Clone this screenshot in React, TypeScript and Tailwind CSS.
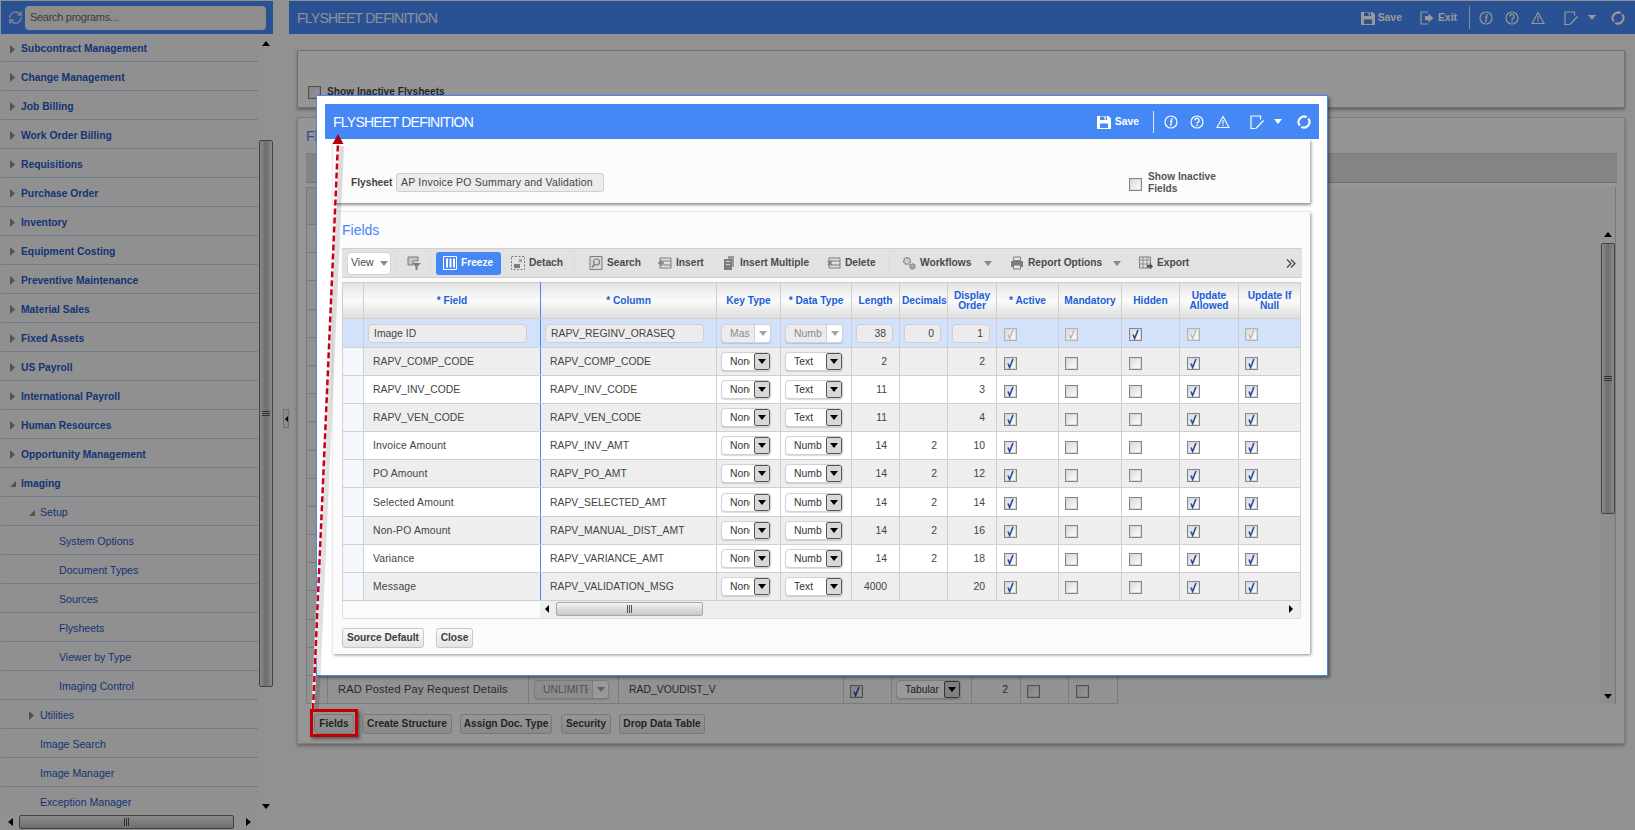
import { RefreshCw } from "lucide-react";
import type { ReactNode } from "react";

type IconProps = { className?: string };

const sideMenu = [
  { label: "Subcontract Management", level: 0, arrow: "right" },
  { label: "Change Management", level: 0, arrow: "right" },
  { label: "Job Billing", level: 0, arrow: "right" },
  { label: "Work Order Billing", level: 0, arrow: "right" },
  { label: "Requisitions", level: 0, arrow: "right" },
  { label: "Purchase Order", level: 0, arrow: "right" },
  { label: "Inventory", level: 0, arrow: "right" },
  { label: "Equipment Costing", level: 0, arrow: "right" },
  { label: "Preventive Maintenance", level: 0, arrow: "right" },
  { label: "Material Sales", level: 0, arrow: "right" },
  { label: "Fixed Assets", level: 0, arrow: "right" },
  { label: "US Payroll", level: 0, arrow: "right" },
  { label: "International Payroll", level: 0, arrow: "right" },
  { label: "Human Resources", level: 0, arrow: "right" },
  { label: "Opportunity Management", level: 0, arrow: "right" },
  { label: "Imaging", level: 0, arrow: "down" },
  { label: "Setup", level: 1, arrow: "down" },
  { label: "System Options", level: 2, arrow: "" },
  { label: "Document Types", level: 2, arrow: "" },
  { label: "Sources", level: 2, arrow: "" },
  { label: "Flysheets", level: 2, arrow: "" },
  { label: "Viewer by Type", level: 2, arrow: "" },
  { label: "Imaging Control", level: 2, arrow: "" },
  { label: "Utilities", level: 1, arrow: "right" },
  { label: "Image Search", level: 1, arrow: "" },
  { label: "Image Manager", level: 1, arrow: "" },
  { label: "Exception Manager", level: 1, arrow: "" },
];

const fieldRows = [
  { field: "RAPV_COMP_CODE", column: "RAPV_COMP_CODE", type: "Text", len: "2", dec: "", order: "2" },
  { field: "RAPV_INV_CODE", column: "RAPV_INV_CODE", type: "Text", len: "11", dec: "", order: "3" },
  { field: "RAPV_VEN_CODE", column: "RAPV_VEN_CODE", type: "Text", len: "11", dec: "", order: "4" },
  { field: "Invoice Amount", column: "RAPV_INV_AMT", type: "Number", len: "14", dec: "2", order: "10" },
  { field: "PO Amount", column: "RAPV_PO_AMT", type: "Number", len: "14", dec: "2", order: "12" },
  { field: "Selected Amount", column: "RAPV_SELECTED_AMT", type: "Number", len: "14", dec: "2", order: "14" },
  { field: "Non-PO Amount", column: "RAPV_MANUAL_DIST_AMT", type: "Number", len: "14", dec: "2", order: "16" },
  { field: "Variance", column: "RAPV_VARIANCE_AMT", type: "Number", len: "14", dec: "2", order: "18" },
  { field: "Message", column: "RAPV_VALIDATION_MSG", type: "Text", len: "4000", dec: "", order: "20" },
];

function Caret({ className = "" }: IconProps) {
  return (
    <svg viewBox="0 0 8 5" className={`h-[5px] w-[8px] shrink-0 fill-current ${className}`}>
      <path d="M0 0h8L4 5z" />
    </svg>
  );
}

function Floppy() {
  return (
    <svg viewBox="0 0 14 14" className="h-[14px] w-[14px] shrink-0 fill-current">
      <path fillRule="evenodd" d="M0 1h11.5L14 3.5V14H0zM3 1.5V5h7V1.5zM7.5 2h1.5v2.5H7.5zM3 8.5V13h8V8.5z" />
    </svg>
  );
}

function ExitDoor() {
  return (
    <svg viewBox="0 0 14 14" className="h-[14px] w-[14px] shrink-0">
      <path d="M8 1H1v12h7" fill="none" stroke="currentColor" strokeWidth="1.2" />
      <path d="M5 5h3.5V2.5L13.5 7l-5 4.5V9H5z" fill="currentColor" />
    </svg>
  );
}

function InfoCircle() {
  return (
    <svg viewBox="0 0 14 14" className="h-[14px] w-[14px] shrink-0">
      <circle cx="7" cy="7" r="6" fill="none" stroke="currentColor" strokeWidth="1.2" />
      <path d="M6.2 6h1.5l-1 4.2h1" fill="none" stroke="currentColor" strokeWidth="1.3" />
      <circle cx="7.8" cy="3.9" r="0.9" fill="currentColor" />
    </svg>
  );
}

function HelpCircle() {
  return (
    <svg viewBox="0 0 14 14" className="h-[14px] w-[14px] shrink-0">
      <circle cx="7" cy="7" r="6" fill="none" stroke="currentColor" strokeWidth="1.2" />
      <path d="M4.9 5.4a2.1 2.1 0 1 1 3.3 1.7c-.8.5-1.2.9-1.2 1.7" fill="none" stroke="currentColor" strokeWidth="1.3" />
      <circle cx="7" cy="10.4" r="0.85" fill="currentColor" />
    </svg>
  );
}

function Warning() {
  return (
    <svg viewBox="0 0 14 14" className="h-[14px] w-[14px] shrink-0">
      <path d="M7 1.6 13 12.5H1z" fill="none" stroke="currentColor" strokeWidth="1.1" />
      <path d="M7 5v4.2" stroke="currentColor" strokeWidth="1.1" />
      <circle cx="7" cy="10.6" r="0.7" fill="currentColor" />
    </svg>
  );
}

function NoteEdit() {
  return (
    <svg viewBox="0 0 14 14" className="h-[14px] w-[14px] shrink-0">
      <path d="M10.5 4.5V1H1v12.5h4" fill="none" stroke="currentColor" strokeWidth="1.2" />
      <path d="M5.5 13 13 5l1 1-7.2 7.6-1.8.4z" fill="currentColor" />
    </svg>
  );
}

function Ring() {
  return (
    <svg viewBox="0 0 14 14" className="h-[14px] w-[14px] shrink-0 fill-none stroke-current">
      <path d="M11.2 3.500A5.500 5.500 0 0 1 4.250 11.760" strokeWidth="2" />
      <path d="M2.800 10.500A5.500 5.500 0 0 1 9.750 2.240" strokeWidth="2" />
    </svg>
  );
}

function ToolIcon({ children }: { children: ReactNode }) {
  return (
    <svg viewBox="0 0 14 14" className="h-[14px] w-[14px] shrink-0 text-[#7d7d7d]">
      {children}
    </svg>
  );
}

const FilterIcon = () => (
  <ToolIcon>
    <path d="M1 1h10v4H6v4H1z" fill="#c4c4c4" stroke="currentColor" />
    <path d="M5 7h9l-3.5 3.5V14h-2v-3.5z" fill="currentColor" />
  </ToolIcon>
);
const FreezeIcon = () => (
  <svg viewBox="0 0 14 14" className="h-[14px] w-[14px] shrink-0">
    <path d="M.5.5h13v13H.5z" fill="none" stroke="#fff" />
    <path d="M3 2.5h2v9H3zM6.5 2.5h2v9h-2zM10 2.5h2v9h-2z" fill="#fff" />
  </svg>
);
const DetachIcon = () => (
  <ToolIcon>
    <path d="M.5.5h13v13H.5z" fill="none" stroke="currentColor" strokeDasharray="2 1.5" />
    <path d="M3 8h6v4H3z" fill="currentColor" />
    <path d="M8 3h3v3H8z" fill="#a0a0a0" />
  </ToolIcon>
);
const SearchIcon = () => (
  <ToolIcon>
    <path d="M1 .5h12v13H1z" fill="#d8d8d8" stroke="currentColor" />
    <circle cx="7.5" cy="6" r="3" fill="none" stroke="currentColor" strokeWidth="1.2" />
    <path d="M5.5 8.5 3 11.5" stroke="currentColor" strokeWidth="1.6" />
  </ToolIcon>
);
const InsertIcon = () => (
  <ToolIcon>
    <path d="M2 2h11v10H2z" fill="#e0e0e0" stroke="currentColor" />
    <path d="M2 5h11M2 9h11" stroke="currentColor" />
    <path d="M0 7h6M3 4.5v5" stroke="currentColor" strokeWidth="1.6" />
  </ToolIcon>
);
const InsertMultipleIcon = () => (
  <ToolIcon>
    <path d="M6 0h6v11H6z" fill="#999" />
    <path d="M2 3h8v11H2z" fill="currentColor" />
    <path d="M4 5h4v1H4zM4 8h4v1H4z" fill="#d0d0d0" />
  </ToolIcon>
);
const DeleteIcon = () => (
  <ToolIcon>
    <path d="M2 2h11v10H2z" fill="#e0e0e0" stroke="currentColor" />
    <path d="M2 5h11M2 9h11" stroke="currentColor" />
    <path d="M1 5l4 4M5 5 1 9" stroke="currentColor" strokeWidth="1.4" />
  </ToolIcon>
);
const GearsIcon = () => (
  <ToolIcon>
    <circle cx="5" cy="5" r="3.3" fill="#d0d0d0" stroke="currentColor" strokeWidth="1.4" strokeDasharray="2 .8" />
    <circle cx="10.5" cy="10.5" r="2.6" fill="#aaa" stroke="currentColor" strokeWidth="1.2" strokeDasharray="1.6 .7" />
  </ToolIcon>
);
const PrinterIcon = () => (
  <ToolIcon>
    <path d="M3.5 1h7v3.5h-7z" fill="#e4e4e4" stroke="currentColor" />
    <path d="M1 5h12v6H1z" fill="currentColor" />
    <path d="M3.5 9h7v4h-7z" fill="#e4e4e4" stroke="currentColor" />
  </ToolIcon>
);
const ExportIcon = () => (
  <ToolIcon>
    <path d="M.5 1h11v11H.5z" fill="#e0e0e0" stroke="currentColor" />
    <path d="M.5 4h11M4 1v11M8 1v11M.5 8h11" stroke="currentColor" strokeWidth="0.8" />
    <path d="M8 9h3V7l3 3.5-3 3v-2H8z" fill="#555" />
  </ToolIcon>
);

function Check({ on = false, disabled = false }: { on?: boolean; disabled?: boolean }) {
  return (
    <span
      className={`relative mt-[3px] block h-[13px] w-[13px] border bg-gradient-to-br from-[#d8d8d8] to-white shadow-[inset_0_0_0_1px_#dadada] ${
        disabled ? "border-[#b4b4b4]" : "border-[#868686]"
      }`}
    >
      {on && (
        <svg viewBox="0 0 11 11" className="absolute inset-0 h-[11px] w-[11px]">
          <path
            d="M3 5.5 4.6 9.5 8 1"
            fill="none"
            stroke={disabled ? "#b0b0b0" : "#2c4a9c"}
            strokeWidth={disabled ? 1.1 : 1.6}
          />
        </svg>
      )}
    </span>
  );
}

function Select({ text, disabled = false, className = "" }: { text: string; disabled?: boolean; className?: string }) {
  return (
    <div
      className={`flex h-[19px] overflow-hidden rounded-[4px] border border-[#d2d2d2] shadow-[0_1px_1px_rgba(0,0,0,0.15)] ${
        disabled ? "bg-[#ececec] text-[#8a8a8a]" : "bg-white text-[#333]"
      } ${className}`}
    >
      <span className="ml-[8px] mr-[4px] min-w-0 flex-1 overflow-hidden whitespace-nowrap leading-[17px]">{text}</span>
      <span
        className={`flex w-[16px] shrink-0 items-center justify-center border ${
          disabled
            ? "border-y-0 border-r-0 border-[#d0d0d0] bg-white text-[#a4a4a4]"
            : "rounded-[2px] border-[#555] bg-[#d8d8d8] text-black"
        }`}
      >
        <Caret />
      </span>
    </div>
  );
}

function ReadonlyInput({ value, className = "" }: { value: string; className?: string }) {
  return (
    <div
      className={`h-[19px] rounded-[4px] border border-[#cfcfcf] bg-[#ececec] px-[5px] leading-[17px] text-[#444] ${className}`}
    >
      {value}
    </div>
  );
}

function GrayButton({ children, className = "" }: { children: ReactNode; className?: string }) {
  return (
    <button
      className={`flex h-[20px] items-center justify-center whitespace-nowrap rounded-[3px] border border-[#c8c8c8] bg-gradient-to-b from-[#fafafa] to-[#e4e4e4] text-[10.2px] font-bold text-[#3c3c3c] ${className}`}
    >
      {children}
    </button>
  );
}

function Tool({ icon, label, className = "" }: { icon: ReactNode; label: string; className?: string }) {
  return (
    <div className={`flex shrink-0 items-center gap-[4px] whitespace-nowrap ${className}`}>
      {icon}
      <span>{label}</span>
    </div>
  );
}

function ThumbGrip({ vertical = false }: { vertical?: boolean }) {
  return (
    <span className={vertical ? "flex flex-col gap-px" : "flex gap-px"}>
      <span className={vertical ? "h-px w-[8px] bg-[#555]" : "h-[8px] w-px bg-[#555]"} />
      <span className={vertical ? "h-px w-[8px] bg-[#555]" : "h-[8px] w-px bg-[#555]"} />
      <span className={vertical ? "h-px w-[8px] bg-[#555]" : "h-[8px] w-px bg-[#555]"} />
    </span>
  );
}

function Sidebar() {
  return (
    <aside className="flex h-[829px] w-[272px] shrink-0 flex-col">
      <div className="flex h-[33px] shrink-0 items-center bg-[#4587f5] pl-[7px] text-white">
        <RefreshCw size={15} strokeWidth={2.4} className="shrink-0 text-[#c8d8f4]" />
        <div className="ml-[2px] flex h-[24px] w-[241px] items-center rounded-[4px] bg-[#ececec] pl-[5px] text-[11px] tracking-[-0.3px] text-[#666]">
          Search programs...
        </div>
      </div>
      <div className="flex min-h-0 flex-1">
        <ul className="h-full w-[257px] shrink-0 overflow-hidden bg-[#f0f0f0]">
          {sideMenu.map((m, i) => (
            <li
              key={m.label}
              className={`flex shrink-0 items-center border-b border-[#b9cdea] pt-[3px] text-[#2458c4] ${
                i === 0 ? "h-[28px]" : "h-[29px]"
              } ${m.level === 0 ? "text-[10.3px] font-bold" : "text-[10.6px]"}`}
            >
              <span
                className={`flex w-[5px] justify-center text-[#8a8a8a] ${
                  m.level === 0 ? "ml-[9px]" : m.level === 1 ? "ml-[28px]" : "ml-[58px]"
                }`}
              >
                {m.arrow === "right" && (
                  <svg viewBox="0 0 5 9" className="h-[9px] w-[5px] shrink-0 fill-current">
                    <path d="M0 0l5 4.5L0 9z" />
                  </svg>
                )}
                {m.arrow === "down" && (
                  <svg viewBox="0 0 8 8" className="h-[8px] w-[8px] shrink-0 fill-current">
                    <path d="M7 1v6H1z" />
                  </svg>
                )}
              </span>
              <span className={m.level === 2 ? "ml-[-5px]" : "ml-[6px]"}>{m.label}</span>
            </li>
          ))}
        </ul>
        <div className="flex w-[15px] shrink-0 flex-col items-center bg-[#f2f2f2]">
          <div className="flex h-[20px] w-full items-center justify-center text-black">
            <Caret className="rotate-180" />
          </div>
          <div className="mt-[86px] flex h-[548px] w-[14px] items-center justify-center rounded-[2px] border border-[#6f6f6f] bg-gradient-to-r from-[#e8e8e8] via-[#b4b4b4] to-[#e8e8e8]">
            <ThumbGrip vertical />
          </div>
          <div className="mt-[112px] flex h-[14px] w-full items-center justify-center text-black">
            <Caret />
          </div>
        </div>
      </div>
      <div className="flex h-[17px] w-full shrink-0 items-center bg-[#f2f2f2]">
        <span className="ml-[7px] h-0 w-0 border-y-[4px] border-r-[5px] border-y-transparent border-r-black" />
        <div className="ml-[6px] flex h-[14px] w-[215px] items-center justify-center rounded-[2px] border border-[#6f6f6f] bg-gradient-to-b from-[#e8e8e8] to-[#b8b8b8]">
          <ThumbGrip />
        </div>
        <span className="ml-[12px] h-0 w-0 border-y-[4px] border-l-[5px] border-y-transparent border-l-black" />
      </div>
    </aside>
  );
}

function MainHeader() {
  return (
    <header className="flex h-[33px] shrink-0 items-center bg-[#4587f5] pl-[8px] text-white">
      <h1 className="pt-px text-[14px] tracking-[-0.75px] text-[#e8effc]">FLYSHEET DEFINITION</h1>
      <div className="ml-auto flex items-center text-[10.4px] font-bold">
        <Floppy />
        <span className="ml-[3px]">Save</span>
        <span className="ml-[18px]">
          <ExitDoor />
        </span>
        <span className="ml-[4px]">Exit</span>
        <span className="ml-[12px] h-[23px] w-px bg-[#dfe9fb]" />
        <span className="ml-[9px]">
          <InfoCircle />
        </span>
        <span className="ml-[12px]">
          <HelpCircle />
        </span>
        <span className="ml-[12px]">
          <Warning />
        </span>
        <span className="ml-[19px]">
          <NoteEdit />
        </span>
        <Caret className="ml-[10px]" />
        <span className="ml-[15px] mr-[10px]">
          <Ring />
        </span>
      </div>
    </header>
  );
}

function BackgroundPage() {
  const rows = Array.from({ length: 16 });
  return (
    <main className="flex min-w-0 flex-1 flex-col">
      <MainHeader />
      <section className="ml-[8px] mt-[16px] flex h-[58px] w-[1328px] shrink-0 items-end border border-[#bdbdbd] bg-[#f9f9f9] pb-[8px] pl-[10px] shadow-[0_2px_3px_rgba(0,0,0,0.3)]">
        <Check />
        <span className="ml-[6px] text-[10.2px] font-bold text-[#444]">Show Inactive Flysheets</span>
      </section>
      <section className="ml-[8px] mt-[9px] h-[627px] w-[1328px] shrink-0 border border-[#d0d0d0] bg-[#f9f9f9] px-[8px] shadow-[0_2px_3px_rgba(0,0,0,0.3)]">
        <h2 className="mt-[8px] h-[20px] text-[14px] leading-[20px] text-[#4587f5]">Flysheets</h2>
        <div className="mt-[7px] h-[30px] w-[1311px] border-b border-t border-[#cfd6e0] border-b-[#bbb] bg-[#dcdcdc]" />
        <div className="relative mt-[4px] h-[517px] w-[1310px] border-r border-[#c4c8d0] bg-[#f2f3f3]">
          <table className="table-fixed border-collapse text-[10.4px] text-[#444]">
            <colgroup>
              <col className="w-[21px]" />
              <col className="w-[201px]" />
              <col className="w-[90px]" />
              <col className="w-[225px]" />
              <col className="w-[48px]" />
              <col className="w-[80px]" />
              <col className="w-[49px]" />
              <col className="w-[48px]" />
              <col className="w-[49px]" />
            </colgroup>
            <tbody>
              <tr className="h-[37px]">
                <td colSpan={9} className="border border-[#cdcdcd] bg-[#e8e8e8]" />
              </tr>
              {rows.map((_, i) => (
                <tr key={i} className="h-[28.2px]">
                  <td className="border border-[#cdcdcd]" />
                  <td colSpan={8} className="border border-[#cdcdcd]" />
                </tr>
              ))}
              <tr className="h-[28px]">
                <td className="border border-[#cdcdcd]" />
                <td className="border border-[#cdcdcd] pl-[10px] text-[11px] tracking-[0.22px]">
                  RAD Posted Pay Request Details
                </td>
                <td className="border border-[#cdcdcd] px-[5px]">
                  <Select text="UNLIMITED" disabled className="w-[75px]" />
                </td>
                <td className="border border-[#cdcdcd] pl-[10px]">RAD_VOUDIST_V</td>
                <td className="border border-[#cdcdcd] pl-[6px]">
                  <Check on />
                </td>
                <td className="border border-[#cdcdcd] pl-[4px]">
                  <Select text="Tabular" className="w-[65px]" />
                </td>
                <td className="border border-[#cdcdcd] pr-[12px] text-right">2</td>
                <td className="border border-[#cdcdcd] pl-[6px]">
                  <Check />
                </td>
                <td className="border border-[#cdcdcd] pl-[7px]">
                  <Check />
                </td>
              </tr>
            </tbody>
          </table>
          <div className="absolute bottom-0 right-0 top-[38px] flex w-[15px] flex-col items-center bg-[#ededed]">
            <div className="flex h-[18px] w-full items-center justify-center bg-[#f6f6f6] text-black">
              <Caret className="rotate-180" />
            </div>
            <div className="flex h-[271px] w-[14px] items-center justify-center rounded-[2px] border border-[#6f6f6f] bg-gradient-to-r from-[#e8e8e8] via-[#b4b4b4] to-[#e8e8e8]">
              <ThumbGrip vertical />
            </div>
            <div className="mt-auto flex h-[16px] w-full items-center justify-center text-black">
              <Caret />
            </div>
          </div>
        </div>
        <div className="mt-[10px] flex">
          <GrayButton className="ml-[8px] w-[40px]">Fields</GrayButton>
          <GrayButton className="ml-[8px] w-[90px]">Create Structure</GrayButton>
          <GrayButton className="ml-[8px] w-[92px]">Assign Doc. Type</GrayButton>
          <GrayButton className="ml-[9px] w-[50px]">Security</GrayButton>
          <GrayButton className="ml-[8px] w-[86px]">Drop Data Table</GrayButton>
        </div>
      </section>
    </main>
  );
}

function ModalToolbar() {
  return (
    <div className="flex h-[30px] w-[960px] items-center border-y border-[#cfcfcf] bg-[#e2e2e2] text-[10.2px] font-bold text-[#4a4a4a]">
      <div className="ml-[5px] flex h-[23px] w-[44px] shrink-0 items-center rounded-[4px] border border-[#d4d4d4] bg-white pl-[3px] text-[10.6px] font-normal">
        View
        <Caret className="ml-[6px] text-[#888]" />
      </div>
      <span className="ml-[5px] h-[26px] w-px shrink-0 bg-[#d8dee8]" />
      <span className="ml-[10px]">
        <FilterIcon />
      </span>
      <span className="ml-[9px] h-[26px] w-px shrink-0 bg-[#d8dee8]" />
      <Tool
        icon={<FreezeIcon />}
        label="Freeze"
        className="ml-[5px] h-[23px] w-[65px] rounded-[3px] bg-[#4587f5] pl-[7px] text-white"
      />
      <Tool icon={<DetachIcon />} label="Detach" className="ml-[10px] w-[51px]" />
      <span className="ml-[12px] h-[26px] w-px shrink-0 bg-[#d8dee8]" />
      <Tool icon={<SearchIcon />} label="Search" className="ml-[14px] w-[50px]" />
      <Tool icon={<InsertIcon />} label="Insert" className="ml-[19px] w-[47px]" />
      <Tool icon={<InsertMultipleIcon />} label="Insert Multiple" className="ml-[17px] w-[86px]" />
      <Tool icon={<DeleteIcon />} label="Delete" className="ml-[19px] w-[49px]" />
      <span className="ml-[12px] h-[26px] w-px shrink-0 bg-[#d8dee8]" />
      <Tool icon={<GearsIcon />} label="Workflows" className="ml-[13px] w-[70px]" />
      <Caret className="ml-[12px] text-[#888]" />
      <Tool icon={<PrinterIcon />} label="Report Options" className="ml-[18px] w-[90px]" />
      <Caret className="ml-[13px] text-[#888]" />
      <Tool icon={<ExportIcon />} label="Export" className="ml-[18px] w-[50px]" />
      <svg viewBox="0 0 10 9" className="ml-auto mr-[6px] h-[9px] w-[10px] shrink-0 fill-none stroke-[#444]">
        <path d="M1 .5 5 4.5 1 8.5M5 .5 9 4.5 5 8.5" strokeWidth="1.2" />
      </svg>
    </div>
  );
}

function FieldsTable() {
  const th =
    "border border-[#cfcfcf] bg-gradient-to-b from-[#e4e4e4] via-[#fbfbfb] to-[#dcdcdc] px-[2px] pt-px text-[10.2px] font-bold text-[#1a5fd6]";
  const td = "border border-[#cfcfcf]";
  const blue = "border-r-[#4587f5]";
  return (
    <table className="mt-[4px] w-[959px] table-fixed border-collapse text-[10.4px] leading-[10px] text-[#444]">
      <colgroup>
        <col className="w-[21px]" />
        <col className="w-[177px]" />
        <col className="w-[176px]" />
        <col className="w-[64px]" />
        <col className="w-[71px]" />
        <col className="w-[48px]" />
        <col className="w-[48px]" />
        <col className="w-[49px]" />
        <col className="w-[62px]" />
        <col className="w-[63px]" />
        <col className="w-[58px]" />
        <col className="w-[59px]" />
        <col className="w-[62px]" />
      </colgroup>
      <thead>
        <tr className="h-[36px]">
          <th className={th} />
          <th className={`${th} ${blue}`}>* Field</th>
          <th className={th}>* Column</th>
          <th className={th}>Key Type</th>
          <th className={th}>* Data Type</th>
          <th className={th}>Length</th>
          <th className={`${th} overflow-hidden whitespace-nowrap`}>Decimals</th>
          <th className={th}>
            Display
            <br />
            Order
          </th>
          <th className={th}>* Active</th>
          <th className={th}>Mandatory</th>
          <th className={th}>Hidden</th>
          <th className={th}>
            Update
            <br />
            Allowed
          </th>
          <th className={th}>
            Update If
            <br />
            Null
          </th>
        </tr>
      </thead>
      <tbody>
        <tr className="h-[29px] bg-[#d2e2fa]">
          <td className={td} />
          <td className={`${td} ${blue} px-[4px]`}>
            <ReadonlyInput value="Image ID" className="w-[159px]" />
          </td>
          <td className={`${td} px-[4px]`}>
            <ReadonlyInput value="RAPV_REGINV_ORASEQ" className="w-[159px]" />
          </td>
          <td className={`${td} pl-[4px]`}>
            <Select text="Master" disabled className="w-[50px]" />
          </td>
          <td className={`${td} pl-[4px]`}>
            <Select text="Number" disabled className="w-[58px]" />
          </td>
          <td className={`${td} pl-[4px]`}>
            <ReadonlyInput value="38" className="w-[37px] pr-[6px] text-right" />
          </td>
          <td className={`${td} pl-[4px]`}>
            <ReadonlyInput value="0" className="w-[37px] pr-[6px] text-right" />
          </td>
          <td className={`${td} pl-[4px]`}>
            <ReadonlyInput value="1" className="w-[38px] pr-[6px] text-right" />
          </td>
          <td className={`${td} pl-[7px]`}>
            <Check on disabled />
          </td>
          <td className={`${td} pl-[6px]`}>
            <Check on disabled />
          </td>
          <td className={`${td} pl-[7px]`}>
            <Check on />
          </td>
          <td className={`${td} pl-[7px]`}>
            <Check on disabled />
          </td>
          <td className={`${td} pl-[6px]`}>
            <Check on disabled />
          </td>
        </tr>
        {fieldRows.map((r, i) => (
          <tr key={r.column} className={`h-[28.1px] ${i % 2 === 0 ? "bg-[#eeeeee]" : "bg-white"}`}>
            <td className={`${td} bg-[#f4f7fc]`} />
            <td className={`${td} ${blue} pl-[9px] pt-px ${r.field === r.column ? "" : "tracking-[0.15px]"}`}>
              {r.field}
            </td>
            <td className={`${td} pl-[9px] pt-px`}>{r.column}</td>
            <td className={`${td} pl-[4px]`}>
              <Select text="None" className="w-[50px]" />
            </td>
            <td className={`${td} pl-[4px]`}>
              <Select text={r.type} className="w-[58px]" />
            </td>
            <td className={`${td} pr-[12px] pt-px text-right`}>{r.len}</td>
            <td className={`${td} pr-[10px] pt-px text-right`}>{r.dec}</td>
            <td className={`${td} pr-[11px] pt-px text-right`}>{r.order}</td>
            <td className={`${td} pl-[7px]`}>
              <Check on />
            </td>
            <td className={`${td} pl-[6px]`}>
              <Check />
            </td>
            <td className={`${td} pl-[7px]`}>
              <Check />
            </td>
            <td className={`${td} pl-[7px]`}>
              <Check on />
            </td>
            <td className={`${td} pl-[6px]`}>
              <Check on />
            </td>
          </tr>
        ))}
      </tbody>
    </table>
  );
}

function Modal() {
  return (
    <div className="absolute left-[316px] top-[95px] h-[581px] w-[1012px] border border-[#4587f5] bg-white pl-[8px] pt-[8px] shadow-[2px_2px_3px_rgba(0,0,0,0.4)]">
      <div className="flex h-[35px] w-[994px] items-center bg-[#4587f5] pl-[8px] text-white">
        <h1 className="pt-px text-[14px] tracking-[-0.75px]">FLYSHEET DEFINITION</h1>
        <div className="ml-auto flex items-center text-[10.4px] font-bold">
          <Floppy />
          <span className="ml-[4px]">Save</span>
          <span className="ml-[14px] h-[22px] w-px bg-[#dfe9fb]" />
          <span className="ml-[10px]">
            <InfoCircle />
          </span>
          <span className="ml-[12px]">
            <HelpCircle />
          </span>
          <span className="ml-[12px]">
            <Warning />
          </span>
          <span className="ml-[20px]">
            <NoteEdit />
          </span>
          <Caret className="ml-[10px]" />
          <span className="ml-[15px] mr-[8px]">
            <Ring />
          </span>
        </div>
      </div>
      <section className="ml-[8px] h-[64px] w-[977px] bg-[#fbfbfb] pl-[18px] pt-[34px] text-[10.4px] shadow-[1px_2px_3px_rgba(0,0,0,0.45)]">
        <div className="flex h-[19px] items-center">
          <span className="w-[45px] text-[10.2px] font-bold text-[#444]">Flysheet</span>
          <div className="h-[19px] w-[208px] whitespace-nowrap rounded-[3px] border border-[#cfcfcf] bg-[#ececec] pl-[4px] text-[10.5px] leading-[17px] tracking-[0.2px] text-[#444]">
            AP Invoice PO Summary and Validation
          </div>
          <span className="ml-[525px]">
            <Check />
          </span>
          <span className="ml-[6px] w-[80px] text-[10.2px] font-bold leading-[12px] text-[#555]">
            Show Inactive
            <br />
            Fields
          </span>
        </div>
      </section>
      <section className="ml-[8px] mt-[9px] h-[442px] w-[977px] bg-[#fbfbfb] pl-[9px] pt-[8px] shadow-[1px_1px_3px_rgba(0,0,0,0.45)]">
        <h2 className="h-[20px] text-[14px] leading-[20px] text-[#4587f5]">Fields</h2>
        <div className="mt-[8px]">
          <ModalToolbar />
          <FieldsTable />
          <div className="flex h-[18px] w-[959px] border-x border-b border-[#d4e0f0] text-black">
            <div className="w-[197px] shrink-0 bg-[#fbfbfb]" />
            <div className="flex flex-1 items-center bg-[#eeeeee] pl-[5px]">
              <span className="h-0 w-0 border-y-[4px] border-r-[4px] border-y-transparent border-r-black" />
              <div className="ml-[7px] flex h-[14px] w-[147px] items-center justify-center rounded-[2px] border border-[#a8a8a8] bg-gradient-to-b from-[#f4f4f4] to-[#c8c8c8]">
                <ThumbGrip />
              </div>
              <span className="ml-auto mr-[7px] h-0 w-0 border-y-[4px] border-l-[4px] border-y-transparent border-l-black" />
            </div>
          </div>
          <div className="mt-[9px] flex">
            <GrayButton className="w-[82px]">Source Default</GrayButton>
            <GrayButton className="ml-[12px] w-[37px]">Close</GrayButton>
          </div>
        </div>
      </section>
    </div>
  );
}

function Callout() {
  return (
    <>
      <div className="absolute left-[310px] top-[709px] h-[28px] w-[48px] border-[3px] border-[#c00000] shadow-[2px_2px_3px_rgba(0,0,0,0.4)]" />
      <svg viewBox="0 0 1635 830" className="pointer-events-none absolute inset-0 h-[830px] w-[1635px]">
        <line x1="316" y1="709" x2="341" y2="146" stroke="#000" strokeOpacity="0.12" strokeWidth="6" />
        <line x1="313" y1="709" x2="338" y2="143" stroke="#fff" strokeOpacity="0.85" strokeWidth="3" />
        <line x1="313" y1="709" x2="338" y2="143" stroke="#c4001a" strokeWidth="2.5" strokeDasharray="6 3" />
        <path d="M338 134l5.5 10h-11z" fill="#b00010" />
      </svg>
    </>
  );
}

export default function App() {
  return (
    <div className="relative h-[830px] w-[1635px] overflow-hidden bg-[#f0f2f1] font-['Liberation_Sans',Arial,sans-serif]">
      <div className="flex h-full pl-px pt-px">
        <Sidebar />
        <div className="flex w-[16px] shrink-0 items-center justify-end">
          <div className="mt-[6px] flex h-[19px] w-[6px] items-center justify-center border border-[#bbb] bg-[#e8e8e8]">
            <span className="h-0 w-0 border-y-[3px] border-r-[3px] border-y-transparent border-r-black" />
          </div>
        </div>
        <BackgroundPage />
      </div>
      <div className="absolute inset-0 bg-black/40" />
      <Modal />
      <Callout />
    </div>
  );
}
